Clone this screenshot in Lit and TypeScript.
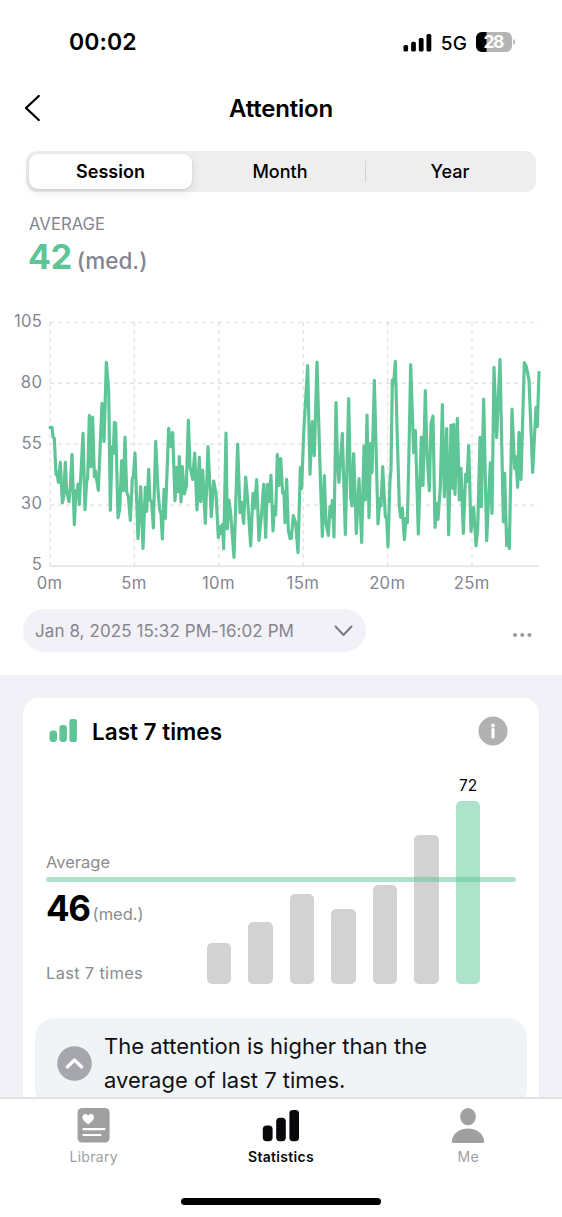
import { LitElement, html, svg, css } from 'lit';
import { customElement, property } from 'lit/decorators.js';
import { classMap } from 'lit/directives/class-map.js';

// x,y pairs in chart units, three units per pixel
const SESSION_TRACE = `150,382 156,382 159,410 163,415 168,523 171,515 175,547 181,487 187,609 191,590
196,487 200,575 207,605 211,560 216,463 223,674 228,572 231,590 234,552 238,614 249,400 255,629 260,545
263,535 268,346 273,500 278,351 283,530 286,512 295,571 306,310 312,425 319,187 326,270 331,631 336,440
340,460 343,367 347,370 354,653 359,630 365,482 370,572 375,411 380,575 385,590 391,661 397,535 400,530
405,459 414,716 422,560 429,745 436,562 440,634 446,508 450,600 455,606 460,684 467,424 474,570 479,630
483,640 487,717 492,568 496,655 506,385 513,440 518,398 525,602 530,502 534,575 538,470 543,606 547,500
553,582 559,560 565,360 570,500 578,538 584,459 591,630 598,472 602,605 608,510 616,670 624,440 634,650
641,543 648,580 655,712 661,680 664,700 668,673 671,746 678,399 682,687 687,600 692,640 702,772 713,432
720,638 724,606 731,670 737,531 743,600 752,738 759,580 763,625 770,539 777,721 784,650 791,553 797,712
802,553 807,605 813,526 819,693 823,620 827,645 832,463 837,556 842,476 848,580 852,575 855,668 860,538
865,690 870,715 874,715 880,647 887,670 894,758 901,502 905,565 911,400 923,197 930,523 937,365 943,467
951,186 960,500 967,709 973,527 978,670 985,706 990,620 993,650 997,601 1002,711 1008,308 1013,500
1017,547 1027,400 1036,703 1046,296 1052,590 1056,618 1061,461 1069,700 1077,536 1085,727 1092,438
1096,600 1101,345 1107,653 1112,430 1116,518 1123,241 1134,672 1140,595 1143,618 1148,500 1156,650
1160,655 1164,740 1170,540 1173,510 1177,240 1181,250 1186,184 1191,380 1198,620 1202,652 1207,624
1213,719 1218,655 1222,668 1226,500 1232,194 1241,458 1246,392 1255,702 1264,411 1269,556 1276,272
1281,460 1288,572 1293,370 1299,348 1305,682 1310,610 1314,658 1321,560 1327,314 1333,590 1340,386
1346,704 1353,375 1358,565 1361,373 1365,583 1372,355 1378,600 1383,505 1390,700 1397,522 1401,545
1406,437 1413,694 1421,622 1428,738 1433,690 1440,412 1444,620 1451,297 1460,722 1471,488 1476,640
1482,202 1490,413 1500,178 1510,665 1514,520 1520,737 1524,690 1528,746 1536,327 1544,505 1547,470
1553,562 1557,397 1563,538 1573,188 1579,200 1587,240 1598,517 1608,322 1612,380 1617,217`;

@customElement('phone-status')
export class PhoneStatus extends LitElement {
  static styles = css`
    :host {
      display: flex;
      align-items: center;
      justify-content: space-between;
      height: 84px;
      padding: 0 46px 0 69px;
      box-sizing: border-box;
      flex: none;
    }

    .time {
      font-size: 23px;
      font-weight: 600;
      letter-spacing: 0.1px;
    }

    .right {
      display: flex;
      align-items: center;
    }

    .network {
      font-size: 19px;
      font-weight: 450;
      margin: 2px 9px 0 9px;
      letter-spacing: 0.1px;
    }

    .level {
      font-family: Inter, sans-serif;
      font-size: 17.5px;
      font-weight: 700;
      fill: #fff;
    }

    svg {
      display: block;
    }
  `;

  render() {
    return html`
      <span class="time">00:02</span>
      <div class="right">
        <svg width="29" height="19" viewBox="0 0 29 19">
          <rect x="0.5" y="12" width="4.6" height="6.5" rx="1.6" />
          <rect x="8.1" y="8.8" width="4.8" height="9.7" rx="1.6" />
          <rect x="15.8" y="5" width="4.8" height="13.5" rx="1.6" />
          <rect x="23.5" y="1" width="4.8" height="17.5" rx="1.6" />
        </svg>
        <span class="network">5G</span>
        <svg width="40" height="20" viewBox="0 0 40 20">
          <rect width="36" height="20" rx="6" fill="#b4b4b4" />
          <path d="M10.5 0H6a6 6 0 0 0-6 6v8a6 6 0 0 0 6 6h4.5z" />
          <path d="M37.2 7v6q2-1 2-3t-2-3z" fill="#b4b4b4" />
          <text class="level" x="18" y="16.3" text-anchor="middle" textLength="21">28</text>
        </svg>
      </div>
    `;
  }
}

@customElement('segment-control')
export class SegmentControl extends LitElement {
  static styles = css`
    :host {
      display: flex;
      height: 41px;
      margin: 0 26px;
      padding: 3px 1px 3px 3px;
      box-sizing: border-box;
      border-radius: 11px;
      background-color: #eeeeef;
      flex: none;
    }

    .segment {
      display: flex;
      flex: 1;
      align-items: center;
      justify-content: center;
      font-size: 18px;
      font-weight: 500;
      position: relative;
    }

    .selected {
      flex: 0 0 163px;
      margin-right: 3px;
      border-radius: 9px;
      background-color: #fff;
      box-shadow: 0 3px 8px rgba(0, 0, 0, 0.1), 0 1px 2px rgba(0, 0, 0, 0.08);
      font-weight: 600;
    }

    .divided::before {
      content: '';
      position: absolute;
      left: 0;
      top: 7px;
      bottom: 7px;
      width: 1px;
      background-color: #d2d2d5;
    }
  `;

  @property({ type: String })
  selected = 'Session';

  render() {
    return ['Session', 'Month', 'Year'].map(
      (name) => html`
        <div class="segment ${classMap({ selected: name === this.selected, divided: name === 'Year' })}">
          ${name}
        </div>
      `
    );
  }
}

@customElement('session-chart')
export class SessionChart extends LitElement {
  static styles = css`
    :host {
      display: block;
      height: 300px;
      flex: none;
    }

    svg {
      display: block;
    }

    .grid {
      stroke: #e2e2e5;
      stroke-width: 4;
      stroke-dasharray: 12 12;
    }

    .axis {
      stroke: #dcdce0;
      stroke-width: 4;
    }

    .trace {
      fill: none;
      stroke: #5ec596;
      stroke-width: 9.5;
      stroke-linejoin: round;
      stroke-linecap: round;
    }

    .label {
      font-family: Inter, sans-serif;
      font-size: 50px;
      letter-spacing: 1px;
      fill: #85858f;
    }
  `;

  render() {
    const rows = [105, 80, 55, 30, 5];
    const columns = [0, 5, 10, 15, 20, 25];
    return html`
      <svg width="562" height="300" viewBox="0 0 1686 900">
        ${rows.map((value, i) => {
          const y = 67 + i * 182.8;
          return svg`
            <line class=${value === 5 ? 'axis' : 'grid'} x1="150" x2="1617" y1=${y} y2=${y} />
            <text class="label" x="127" y=${y + 13} text-anchor="end">${value}</text>
          `;
        })}
        ${columns.map((minute, i) => {
          const x = 150 + i * 253.2;
          return svg`
            <line class="grid" x1=${x} x2=${x} y1="67" y2="798" />
            <text class="label" x=${x - 1} y="866" text-anchor="middle">${minute}m</text>
          `;
        })}
        <polyline class="trace" points=${SESSION_TRACE} />
      </svg>
    `;
  }
}

@customElement('recent-card')
export class RecentCard extends LitElement {
  static styles = css`
    :host {
      display: block;
      height: 500px;
      margin: 0 23px;
      border-radius: 16px;
      background-color: #fff;
    }

    .header {
      display: flex;
      align-items: center;
      height: 66px;
      padding: 0 31px 0 26px;
    }

    .title {
      flex: 1;
      margin-left: 15px;
      font-size: 22.5px;
      font-weight: 600;
      letter-spacing: 0;
    }

    .chart {
      display: grid;
      grid-template-columns: 161px 1fr;
      height: 222px;
      padding: 0 23px;
      position: relative;
    }

    .summary {
      display: flex;
      flex-direction: column;
      color: #8c8c8c;
      font-size: 16.5px;
      padding-top: 87px;
    }

    .summary span {
      line-height: 22px;
    }

    .period {
      letter-spacing: 0.3px;
    }

    .figure {
      display: flex;
      align-items: baseline;
      height: 40px;
      margin: 15px 0 34px;
    }

    .figure b {
      color: #000;
      font-size: 35px;
      line-height: 40px;
      letter-spacing: -1.4px;
      margin-right: 3px;
    }

    .unit {
      position: relative;
      top: -1px;
    }

    .bars {
      display: flex;
      align-items: flex-end;
      gap: 17.2px;
      height: 219.5px;
    }

    .bar {
      position: relative;
      width: 24.3px;
      border-radius: 5px;
      background-color: #d2d2d2;
    }

    .current {
      background-color: #ade2cb;
    }

    .value {
      position: absolute;
      left: 0;
      right: 0;
      top: -25px;
      font-size: 15.5px;
      line-height: 20px;
      text-align: center;
    }

    .average {
      position: absolute;
      left: 23px;
      right: 23px;
      top: 113px;
      height: 5px;
      border-radius: 3px;
      background-color: rgba(94, 197, 150, 0.5);
    }

    .note {
      display: flex;
      align-items: center;
      gap: 12px;
      height: 90px;
      margin: 32px 12px 0;
      padding: 0 22px;
      border-radius: 20px;
      background-color: #f0f4f6;
      font-size: 22px;
      line-height: 34px;
      color: #111;
    }

    svg {
      display: block;
      flex: none;
    }
  `;

  @property({ type: Array })
  heights = [40.3, 62, 89.5, 74.3, 99, 148.5, 183];

  render() {
    const last = this.heights.length - 1;
    return html`
      <div class="header">
        <svg width="28" height="24" viewBox="0 0 28 24" fill="#5ec596">
          <rect x="0.5" y="11.5" width="7.5" height="11.5" rx="3.2" />
          <rect x="10.4" y="6" width="7.5" height="17" rx="3" />
          <rect x="20.4" y="0" width="7.5" height="23" rx="2.6" />
        </svg>
        <div class="title">Last 7 times</div>
        <svg width="30" height="30" viewBox="0 0 30 30">
          <circle cx="15" cy="15" r="14.5" fill="#b1b1b1" />
          <circle cx="15" cy="9.5" r="1.9" fill="#fff" />
          <path d="M15 13.3v7.7" stroke="#fff" stroke-width="3.1" stroke-linecap="round" />
        </svg>
      </div>
      <div class="chart">
        <div class="summary">
          <span>Average</span>
          <div class="figure"><b>46</b><span class="unit">(med.)</span></div>
          <span class="period">Last 7 times</span>
        </div>
        <div class="bars">
          ${this.heights.map(
            (height, i) => html`
              <div class="bar ${classMap({ current: i === last })}" style="height: ${height}px">
                ${i === last ? html`<span class="value">72</span>` : ''}
              </div>
            `
          )}
        </div>
        <div class="average"></div>
      </div>
      <div class="note">
        <svg width="35" height="35" viewBox="0 0 35 35">
          <circle cx="17.5" cy="17.5" r="17.3" fill="#a6a6ae" />
          <path d="M10.3 21l7.2-7 7.2 7" fill="none" stroke="#fff" stroke-width="3.2" stroke-linecap="round" stroke-linejoin="round" />
        </svg>
        <div>The attention is higher than the<br />average of last 7 times.</div>
      </div>
    `;
  }
}

@customElement('tab-bar')
export class TabBar extends LitElement {
  static styles = css`
    :host {
      display: block;
      height: 120px;
      flex: none;
      box-sizing: border-box;
      border-top: 2px solid #e1e1e5;
      background-color: #fff;
    }

    .tabs {
      display: grid;
      grid-template-columns: repeat(3, 1fr);
      height: 99px;
    }

    .tab {
      display: flex;
      flex-direction: column;
      align-items: center;
      padding-top: 9px;
      font-size: 14px;
      line-height: 20px;
      letter-spacing: 0.3px;
      color: #a0a0a0;
      fill: #a0a0a0;
    }

    .active {
      color: #08080c;
      fill: #08080c;
      font-weight: 600;
    }

    svg {
      display: block;
      margin-bottom: 3px;
    }

    .indicator {
      width: 200px;
      height: 7px;
      margin: 0 auto;
      border-radius: 4px;
      background-color: #000;
    }
  `;

  render() {
    return html`
      <div class="tabs">
        <div class="tab">
          <svg width="34" height="36" viewBox="0 0 34 36">
            <rect x="0.6" y="0" width="32" height="34.6" rx="4.5" />
            <path d="M11.2 16.4C8.2 14.2 5.4 12 5.4 9.1 5.4 7 7 6 8.5 6c1.2 0 2.1.6 2.7 1.6.6-1 1.5-1.6 2.7-1.6 1.5 0 3.1 1 3.1 3.100 0 2.900-2.800 5.100-5.800 7.300z" fill="#fff" />
            <path d="M6.400 21.200h21M6.400 27h17.200" stroke="#fff" stroke-width="2.200" stroke-linecap="round" />
          </svg>
          Library
        </div>
        <div class="tab active">
          <svg width="38" height="36" viewBox="0 0 38 36">
            <rect x="0.8" y="17.5" width="9.8" height="15.7" rx="3.8" />
            <rect x="14.2" y="9.7" width="9.6" height="23.5" rx="3.6" />
            <rect x="27.4" y="2" width="9.6" height="31.2" rx="3.4" />
          </svg>
          Statistics
        </div>
        <div class="tab">
          <svg width="34" height="36" viewBox="0 0 34 36">
            <ellipse cx="17" cy="8.6" rx="7.9" ry="8.6" />
            <path d="M3 35C1.4 35 .6 34 .9 32.4 2.2 25 9 20.6 17 20.6S31.8 25 33.1 32.4C33.4 34 32.6 35 31 35z" />
          </svg>
          Me
        </div>
      </div>
      <div class="indicator"></div>
    `;
  }
}

@customElement('app-root')
export class AppRoot extends LitElement {
  static styles = css`
    :host {
      display: flex;
      flex-direction: column;
      height: 1217px;
      overflow: hidden;
      background-color: #fff;
      color: #000;
      font-family: Inter, 'Noto Sans', sans-serif;
    }

    .nav {
      display: grid;
      grid-template-columns: 24px 1fr 24px;
      align-items: center;
      height: 48px;
      margin-bottom: 19px;
      padding: 0 22px;
      flex: none;
    }

    .title {
      font-size: 24px;
      font-weight: 600;
      letter-spacing: -0.2px;
      text-align: center;
    }

    .average {
      display: flex;
      flex-direction: column;
      height: 108px;
      padding: 22px 29px 0;
      box-sizing: border-box;
      flex: none;
      color: #85858f;
      font-size: 16.7px;
      line-height: 20px;
    }

    .reading {
      display: flex;
      align-items: baseline;
      gap: 5px;
      line-height: 46px;
      font-size: 22.5px;
      font-weight: 500;
    }

    .reading b {
      color: #5ec596;
      font-size: 34px;
      letter-spacing: -0.3px;
      margin-left: -1px;
    }

    .picker {
      display: flex;
      align-items: flex-start;
      justify-content: space-between;
      height: 75px;
      padding: 9px 30px 0 23px;
      box-sizing: border-box;
      flex: none;
    }

    .pill {
      display: flex;
      align-items: center;
      justify-content: space-between;
      width: 343px;
      height: 43px;
      padding: 0 13px 0 12px;
      box-sizing: border-box;
      border-radius: 22px;
      background-color: #f2f1f8;
      color: #85858c;
      font-size: 17px;
      letter-spacing: 0.08px;
    }

    .more {
      margin-top: 23px;
    }

    .feed {
      flex: 1;
      min-height: 0;
      overflow: hidden;
      padding-top: 23px;
      background-color: #f2f1f8;
    }

    svg {
      display: block;
    }
  `;

  render() {
    return html`
      <phone-status></phone-status>
      <div class="nav">
        <svg width="20" height="28" viewBox="0 0 20 28">
          <path d="M16.8 2L4 14l12.800 12" fill="none" stroke="#000" stroke-width="2.3" stroke-linecap="round" stroke-linejoin="round" />
        </svg>
        <div class="title">Attention</div>
      </div>
      <segment-control></segment-control>
      <div class="average">
        <div>AVERAGE</div>
        <div class="reading"><b>42</b>(med.)</div>
      </div>
      <session-chart></session-chart>
      <div class="picker">
        <div class="pill">
          <span>Jan 8, 2025 15:32 PM-16:02 PM</span>
          <svg width="19" height="12" viewBox="0 0 19 12">
            <path d="M1.5 1.5l8 8.5 8-8.5" fill="none" stroke="#77777e" stroke-width="1.9" stroke-linecap="round" stroke-linejoin="round" />
          </svg>
        </div>
        <svg class="more" width="20" height="6" viewBox="0 0 20 6" fill="#9a9a9e">
          <circle cx="3" cy="3" r="2" />
          <circle cx="10.2" cy="3" r="2" />
          <circle cx="17.4" cy="3" r="2" />
        </svg>
      </div>
      <div class="feed">
        <recent-card></recent-card>
      </div>
      <tab-bar></tab-bar>
    `;
  }
}

declare global {
  interface HTMLElementTagNameMap {
    'app-root': AppRoot;
    'phone-status': PhoneStatus;
    'segment-control': SegmentControl;
    'session-chart': SessionChart;
    'recent-card': RecentCard;
    'tab-bar': TabBar;
  }
}
